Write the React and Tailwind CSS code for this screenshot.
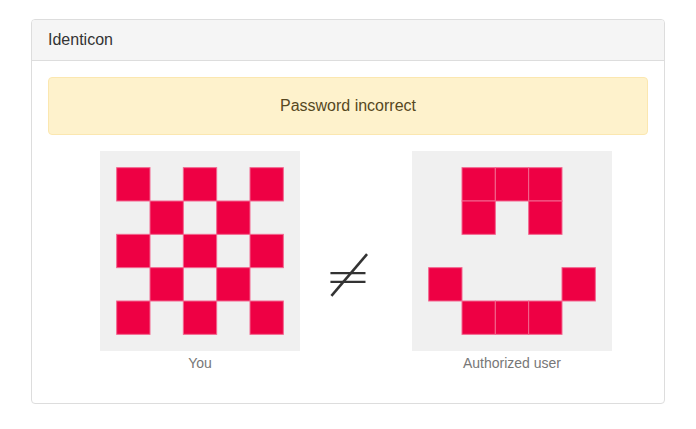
import React from 'react'

const YOU = [
  [1, 0, 1, 0, 1],
  [0, 1, 0, 1, 0],
  [1, 0, 1, 0, 1],
  [0, 1, 0, 1, 0],
  [1, 0, 1, 0, 1],
]

const AUTHORIZED = [
  [0, 1, 1, 1, 0],
  [0, 1, 0, 1, 0],
  [0, 0, 0, 0, 0],
  [1, 0, 0, 0, 1],
  [0, 1, 1, 1, 0],
]

// 5x5 grid, half a cell of margin round it (200 / 6 per cell)
function Identicon({ grid }) {
  const cell = 200 / 6
  return (
    <svg width="200" height="200" viewBox="0 0 200 200" className="block">
      <rect x="0" y="0" width="200" height="200" fill="#f0f0f0" />
      {grid.map((row, r) =>
        row.map((on, c) =>
          on ? (
            <rect
              key={`${r}-${c}`}
              x={cell / 2 + c * cell}
              y={cell / 2 + r * cell}
              width={cell}
              height={cell}
              fill="#ee0044"
              stroke="#f2668f"
              strokeWidth="1"
            />
          ) : null
        )
      )}
    </svg>
  )
}

function Figure({ grid, label }) {
  return (
    <div className="flex flex-col items-center w-[200px]">
      <Identicon grid={grid} />
      <div className="text-[14px] leading-6 text-[#777777]">{label}</div>
    </div>
  )
}

export default function App() {
  return (
    <div className="min-h-[429px] bg-white pt-[19px] pl-[31px] font-['Liberation_Sans',Arial,sans-serif]">
      <div className="w-[634px] border border-[#dddddd] rounded-[4px] overflow-hidden">
        <div className="bg-[#f5f5f5] border-b border-[#dddddd] px-4 py-[10px] text-[16px] leading-5 text-[#333333]">
          Identicon
        </div>
        <div className="p-4">
          <div className="h-[58px] flex items-center justify-center bg-[#fef2cc] border border-[#fbe7b0] rounded-[4px] text-[16px] text-[#56481f]">
            Password incorrect
          </div>
          <div className="flex mt-4 pb-3 pl-[52px]">
            <Figure grid={YOU} label="You" />
            <div className="w-[112px] flex justify-center items-center pr-4 pt-[26px]">
              <span className="font-['DejaVu_Sans',sans-serif] font-extralight text-[56px] leading-none text-[#333333]">≠</span>
            </div>
            <Figure grid={AUTHORIZED} label="Authorized user" />
          </div>
        </div>
      </div>
    </div>
  )
}
